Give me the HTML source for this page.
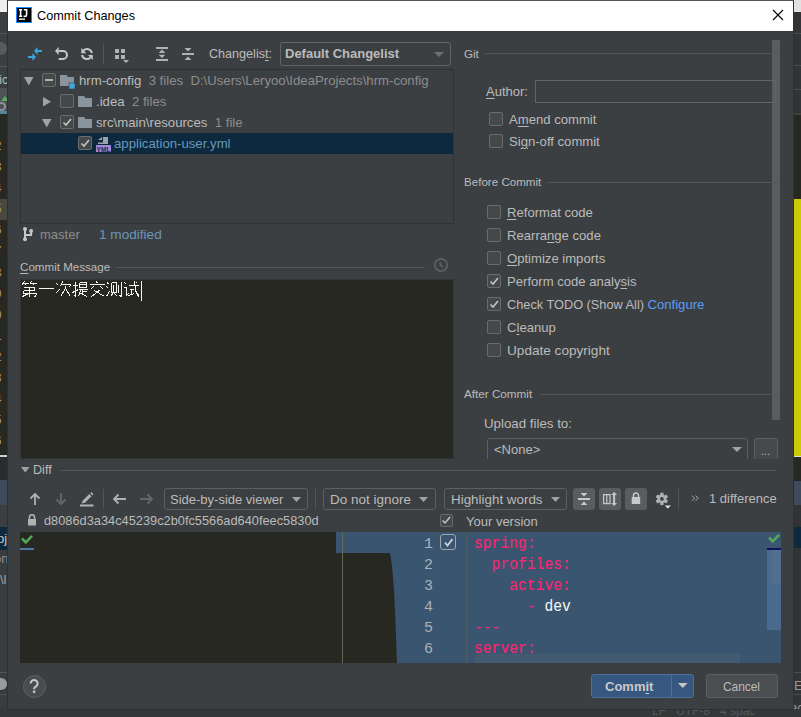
<!DOCTYPE html>
<html><head><meta charset="utf-8">
<style>
*{box-sizing:border-box;margin:0;padding:0}
html,body{width:801px;height:717px;overflow:hidden;background:#313335;font-family:"Liberation Sans",sans-serif;font-size:13px;color:#bbbbbb}
.a{position:absolute}
.t{position:absolute;white-space:pre;line-height:16px}
.cb{position:absolute;width:14px;height:14px;border:1px solid #6b6b6b;border-radius:2px;background:#43494a}
.u{text-decoration:underline;text-decoration-thickness:1px;text-underline-offset:2px}
.sep{position:absolute;height:1px;background:#515658}
.combo{position:absolute;border:1px solid #5e6060;border-radius:3px}
.g{color:#8d8d8d}
svg{position:absolute;overflow:visible}
</style></head>
<body>
<!-- ===== background IDE (left strip) ===== -->
<div class="a" style="left:0;top:0;width:8px;height:12px;background:#eeeeee"></div>
<div class="a" style="left:0;top:12px;width:8px;height:101px;background:#3c3f41"></div>
<div class="a" style="left:0;top:33px;width:8px;height:1px;background:#555"></div>
<div class="a" style="left:0;top:66px;width:8px;height:1px;background:#555"></div>
<div class="a" style="left:0;top:42px;width:7px;height:13px;background:#585b5e;border-radius:0 6px 6px 0"></div>
<div class="t" style="left:-4px;top:72px;color:#bbb;font-size:12px">tic</div>
<div class="a" style="left:0;top:88px;width:8px;height:25px;background:#4e5254"></div>
<div class="a" style="left:1px;top:96px;width:0;height:0;border-left:4px solid transparent;border-right:4px solid transparent;border-bottom:5px solid #59a869"></div>
<div class="a" style="left:-3px;top:102px;width:9px;height:9px;border:2px solid #8e9296;border-radius:50%"></div>
<div class="a" style="left:0;top:111px;width:8px;height:3px;background:#4f8593"></div>
<div class="a" style="left:0;top:114px;width:8px;height:341px;background:#272822"></div>
<div class="a" style="left:0;top:199px;width:8px;height:21px;background:#48483e"></div>
<div class="a" style="left:-6px;top:136px;width:14px;height:319px;overflow:hidden;font-family:'Liberation Mono',monospace;font-size:13px;line-height:21.1px;color:#a89a78;white-space:pre">2
3
4
5
6
7
8
9
0
1
2
3
4
5
6</div>
<div class="a" style="left:0;top:455px;width:8px;height:2px;background:#cfcfcf"></div>
<div class="a" style="left:0;top:457px;width:8px;height:23px;background:#2b2b2b"></div>
<div class="a" style="left:0;top:480px;width:8px;height:25px;background:#3d4b5c"></div>
<div class="a" style="left:0;top:505px;width:8px;height:22px;background:#3c3f41"></div>
<div class="a" style="left:0;top:527px;width:8px;height:23px;background:#0d293e"></div>
<div class="a" style="left:0;top:550px;width:8px;height:167px;background:#393c3e"></div>
<div class="a" style="left:0;top:694px;width:8px;height:1px;background:#4e4e4e"></div>
<div class="t" style="left:-3px;top:531px;color:#c8c8c8;font-size:13px">pj</div>
<div class="t" style="left:-6px;top:551px;color:#8d8d8d;font-size:13px">on</div>
<div class="t" style="left:0px;top:572px;color:#a0a0a0;font-size:13px">\l</div>
<div class="a" style="left:0;top:672px;width:8px;height:1px;background:#555"></div>
<div class="a" style="left:0;top:678px;width:7px;height:12px;background:#9a9a9a;border-radius:0 6px 6px 0"></div>
<!-- right strip -->
<div class="a" style="left:793px;top:0;width:8px;height:12px;background:#e2e2e2"></div>
<div class="a" style="left:793px;top:33px;width:8px;height:1px;background:#4a4d4f"></div>
<div class="a" style="left:793px;top:65px;width:8px;height:1px;background:#4a4d4f"></div>
<div class="a" style="left:793px;top:89px;width:8px;height:1px;background:#4a4d4f"></div>
<div class="a" style="left:793px;top:113px;width:8px;height:2px;background:#3c3f41"></div>
<div class="a" style="left:793px;top:115px;width:8px;height:84px;background:#272822"></div>
<div class="a" style="left:793px;top:199px;width:8px;height:257px;background:#c9cc00"></div>
<div class="a" style="left:793px;top:456px;width:8px;height:1px;background:#ddd"></div>
<div class="a" style="left:793px;top:457px;width:8px;height:24px;background:#272822"></div>
<div class="a" style="left:793px;top:481px;width:8px;height:24px;background:#3d4b5c"></div>
<div class="a" style="left:793px;top:527px;width:8px;height:21px;background:#0d293e"></div>
<div class="a" style="left:793px;top:672px;width:8px;height:1px;background:#4a4d4f"></div>
<div class="a" style="left:793px;top:694px;width:8px;height:1px;background:#4a4d4f"></div>
<div class="t" style="left:794px;top:678px;color:#999;font-size:13px">Ev</div>
<div class="t" style="left:790px;top:700px;color:#999;font-size:13px">ac</div>
<!-- bottom status strip -->
<div class="a" style="left:0;top:709px;width:801px;height:8px;background:#353739"></div>
<div class="t" style="left:652px;top:703px;color:#55585a;font-size:12px">LF   UTF-8   4 spac</div>

<!-- ===== dialog ===== -->
<div class="a" style="left:7px;top:0;width:787px;height:710px;background:#3c3f41;border:1px solid #2e3032;border-top-color:#555"></div>
<div class="a" style="left:8px;top:1px;width:785px;height:30px;background:#ffffff"></div>
<svg style="left:16px;top:7px" width="16" height="16" viewBox="0 0 16 16">
 <rect x="0.5" y="0.5" width="15" height="15" fill="#000" stroke="#1e88ff" stroke-width="1"/>
 <path d="M3 2.8h3.2M4.6 2.8v6.4M3 9.2h3.2M7.8 2.8h3.6M10.6 2.8v4.9q0 1.7-1.6 1.7h-1.4" stroke="#fff" stroke-width="1.6" fill="none"/>
 <rect x="3" y="11.5" width="6" height="1.3" fill="#fff"/>
</svg>
<div class="t" style="left:37px;top:8px;color:#000;font-size:12.7px">Commit Changes</div>
<svg style="left:772px;top:9px" width="12" height="12" viewBox="0 0 12 12"><path d="M1 1L11 11M11 1L1 11" stroke="#000" stroke-width="1.1"/></svg>

<!-- toolbar icons -->
<svg style="left:24px;top:42px" width="24" height="24" viewBox="0 0 24 24">
 <path d="M13.5 5L10 9l3.5 4z M13.5 8h4.5v2h-4.5z M8.4 11L12 15l-3.6 4z M3.85 14h4.55v2h-4.55z" fill="#3aa3dc"/>
</svg>
<svg style="left:50px;top:42px" width="24" height="24" viewBox="0 0 24 24">
 <path d="M8.7 9H13A4 4 0 0 1 13 17H8.7" fill="none" stroke="#c4c6c8" stroke-width="2"/>
 <path d="M5 9l3.7-4v8z" fill="#c4c6c8"/>
</svg>
<svg style="left:75px;top:42px" width="24" height="24" viewBox="0 0 24 24">
 <path d="M8.46 8.46A5 5 0 0 1 16.9 11" fill="none" stroke="#c4c6c8" stroke-width="2"/>
 <path d="M15.5 15.5A5 5 0 0 1 7 13" fill="none" stroke="#c4c6c8" stroke-width="2"/>
 <path d="M6.3 6v5.3h5z M17.8 18v-5h-4.8z" fill="#c4c6c8"/>
</svg>
<div class="a" style="left:103px;top:44px;width:1px;height:20px;background:#515658"></div>
<svg style="left:114px;top:48px" width="16" height="16" viewBox="0 0 16 16">
 <rect x="1" y="1" width="4" height="4" fill="#afb1b3"/><rect x="7" y="1" width="4" height="4" fill="#afb1b3"/>
 <rect x="1" y="7" width="4" height="4" fill="#afb1b3"/><rect x="7" y="7" width="4" height="4" fill="#afb1b3"/>
 <path d="M9 12h6l-3 3z" fill="#afb1b3"/>
</svg>
<svg style="left:154px;top:45px" width="16" height="18" viewBox="0 0 16 18">
 <rect x="2" y="2" width="12" height="2" fill="#afb1b3"/><rect x="2" y="14" width="12" height="2" fill="#afb1b3"/>
 <path d="M8 4.6l3.4 3.4h-6.8z M8 13.1l3.4-3.4h-6.8z" fill="#afb1b3"/>
</svg>
<svg style="left:180px;top:45px" width="16" height="18" viewBox="0 0 16 18">
 <rect x="2" y="8" width="12" height="2" fill="#afb1b3"/>
 <path d="M4.5 3h7L8 6.5z M4.5 15h7L8 11.5z" fill="#afb1b3"/>
</svg>

<div class="t" style="left:209px;top:46px;font-size:12.6px">Changelis<span class="u">t</span>:</div>
<div class="combo" style="left:280px;top:42px;width:171px;height:24px;border-color:#646464"></div>
<div class="t" style="left:285px;top:46px;font-weight:bold">Default Changelist</div>
<svg style="left:434px;top:52px" width="10" height="5" viewBox="0 0 10 5"><path d="M0 0h10L5 5z" fill="#6e7072"/></svg>

<!-- tree -->
<div class="a" style="left:20px;top:69px;width:434px;height:155px;border:1px solid #323232"></div>
<div class="a" style="left:21px;top:133px;width:432px;height:21px;background:#0d293e"></div>
<svg style="left:24px;top:77px" width="10" height="9" viewBox="0 0 10 9"><path d="M0 0h9.5L4.75 8.5z" fill="#a0a2a4"/></svg>
<div class="cb" style="left:42px;top:73px"></div>
<div class="a" style="left:45px;top:79px;width:8px;height:2px;background:#b0b0b0"></div>
<svg style="left:60px;top:75px" width="16" height="14" viewBox="0 0 16 14">
 <path d="M0 0h6.5l1.5 2h6v9h-14z" fill="#8a949c"/>
 <rect x="9" y="8" width="6" height="6" fill="#3fa9dc" stroke="#3c3f41" stroke-width="0.6"/>
</svg>
<div class="t" style="left:79px;top:73px;font-size:13.2px">hrm-config  <span class="g">3 files  D:\Users\Leryoo\IdeaProjects\hrm-config</span></div>

<svg style="left:43px;top:97px" width="9" height="10" viewBox="0 0 9 10"><path d="M0 0v9.5L8 4.75z" fill="#a0a2a4"/></svg>
<div class="cb" style="left:60px;top:94px"></div>
<svg style="left:78px;top:96px" width="14" height="11" viewBox="0 0 14 11"><path d="M0 0h6l1.5 2h6.5v9h-14z" fill="#8a949c"/></svg>
<div class="t" style="left:96px;top:94px;font-size:13.2px">.idea  <span class="g">2 files</span></div>

<svg style="left:41.5px;top:119px" width="10" height="9" viewBox="0 0 10 9"><path d="M0 0h9.5L4.75 8.5z" fill="#a0a2a4"/></svg>
<div class="cb" style="left:60px;top:115px"></div>
<svg style="left:61px;top:116px" width="12" height="12" viewBox="0 0 12 12"><path d="M2.5 6.5l2.5 2.5 5-6" fill="none" stroke="#c4c4c4" stroke-width="1.6"/></svg>
<svg style="left:78px;top:117px" width="14" height="11" viewBox="0 0 14 11"><path d="M0 0h6l1.5 2h6.5v9h-14z" fill="#8a949c"/></svg>
<div class="t" style="left:96px;top:115px;font-size:13.2px">src\main\resources  <span class="g">1 file</span></div>

<div class="cb" style="left:78px;top:136px"></div>
<svg style="left:79px;top:137px" width="12" height="12" viewBox="0 0 12 12"><path d="M2.5 6.5l2.5 2.5 5-6" fill="none" stroke="#c4c4c4" stroke-width="1.6"/></svg>
<svg style="left:96px;top:136px" width="16" height="16" viewBox="0 0 16 16">
 <path d="M2 4L6 1V4Z M7 1h5v7h-5z M2 6.4h10v1.6h-10z" fill="#9aa5ad"/>
 <rect x="0" y="9" width="15" height="7" fill="#9f87d9"/>
 <text x="7.5" y="15.7" font-family="Liberation Sans" font-weight="bold" font-size="7.6" fill="#2e2b40" text-anchor="middle" textLength="14" lengthAdjust="spacingAndGlyphs">YML</text>
</svg>
<div class="t" style="left:114px;top:136px;font-size:13.2px;color:#6897bb">application-user.yml</div>

<!-- branch -->
<svg style="left:20px;top:226px" width="14" height="16" viewBox="0 0 14 16">
 <path d="M5 3v10M11.1 5V9.1H5" fill="none" stroke="#c4c6c8" stroke-width="2"/>
 <circle cx="5" cy="2.9" r="2" fill="#c4c6c8"/><circle cx="5" cy="13.2" r="2" fill="#c4c6c8"/><circle cx="11.1" cy="5" r="2" fill="#c4c6c8"/>
</svg>
<div class="t" style="left:40px;top:227px;color:#8d8d8d">master</div>
<div class="t" style="left:99px;top:227px;color:#6897bb;font-size:13.6px">1 modified</div>

<div class="t" style="left:20px;top:259px;font-size:11.6px"><span class="u">C</span>ommit Message</div>
<div class="sep" style="left:116px;top:267px;width:309px"></div>
<svg style="left:433px;top:257px" width="16" height="16" viewBox="0 0 16 16">
 <circle cx="8" cy="8" r="6.2" fill="none" stroke="#5c6063" stroke-width="1.7"/>
 <path d="M7.2 5l0.4 3 2.4 2.2" fill="none" stroke="#5c6063" stroke-width="1.7"/>
</svg>
<div class="a" style="left:20px;top:279px;width:434px;height:180px;background:#272822;border:1px solid #333436"></div>
<svg style="left:0;top:0" width="801" height="717"><path d="M24.5 281.5 L21.5 285.5 M23.5 283.5 L28.5 283.5 M25.5 284.5 L26.5 285.5 M31.5 281.5 L29.5 284.5 M30.5 283.5 L36.5 283.5 M33.5 284.5 L34.5 285.5 M23.5 287.5 L34.5 287.5 M34.5 287.5 L34.5 290.5 M23.5 290.5 L34.5 290.5 M23.5 290.5 L23.5 293.5 M23.5 293.5 L36.5 293.5 M36.5 293.5 L35.5 296.5 L33.5 296.5 M29.5 286.5 L29.5 296.5 M28.5 293.5 L22.5 296.5 M38.5 288.5 L53.5 288.5 M56.5 283.5 L58.5 285.5 M55.5 293.5 L59.5 289.5 M62.5 281.5 L60.5 286.5 M61.5 284.5 L70.5 284.5 L69.5 287.5 M65.5 285.5 L65.5 288.5 L60.5 296.5 M65.5 288.5 L70.5 296.5 M72.5 285.5 L77.5 285.5 M75.5 281.5 L75.5 296.5 L74.5 295.5 M72.5 292.5 L78.5 289.5 M79.5 282.5 L86.5 282.5 L86.5 287.5 L79.5 287.5 L79.5 282.5 M79.5 284.5 L86.5 284.5 M78.5 289.5 L87.5 289.5 M82.5 289.5 L82.5 294.5 M82.5 291.5 L86.5 291.5 M80.5 290.5 L78.5 296.5 M80.5 293.5 L87.5 296.5 M96.5 281.5 L97.5 283.5 M89.5 284.5 L104.5 284.5 M93.5 286.5 L90.5 289.5 M100.5 286.5 L103.5 289.5 M100.5 289.5 L91.5 296.5 M94.5 290.5 L104.5 296.5 M107.5 282.5 L108.5 284.5 M106.5 286.5 L108.5 288.5 M106.5 296.5 L109.5 291.5 M111.5 282.5 L116.5 282.5 L116.5 292.5 L111.5 292.5 L111.5 282.5 M113.5 284.5 L113.5 291.5 M113.5 292.5 L110.5 296.5 M114.5 293.5 L117.5 296.5 M118.5 284.5 L118.5 292.5 M121.5 281.5 L121.5 296.5 L119.5 295.5 M124.5 282.5 L126.5 284.5 M123.5 287.5 L126.5 287.5 L126.5 295.5 L128.5 293.5 M128.5 285.5 L138.5 285.5 M136.5 282.5 L137.5 283.5 M129.5 289.5 L133.5 289.5 M131.5 289.5 L131.5 294.5 M128.5 295.5 L134.5 293.5 M134.5 281.5 L135.5 290.5 L138.5 296.5 L138.5 293.5" fill="none" stroke="#f4f4f0" stroke-width="1" shape-rendering="crispEdges"/></svg>
<div class="a" style="left:141px;top:281px;width:1px;height:20px;background:#f8f8f2"></div>

<!-- ===== right panel ===== -->
<div class="a" style="left:772px;top:40px;width:8px;height:380px;background:#5a5d5f"></div>
<div class="t" style="left:464px;top:46px;font-size:11.6px">Git</div>
<div class="sep" style="left:485px;top:53px;width:293px"></div>
<div class="t" style="left:486px;top:84px"><span class="u">A</span>uthor:</div>
<div class="a" style="left:535px;top:80px;width:241px;height:23px;border:1px solid #646464"></div>
<div class="cb" style="left:489px;top:112px"></div>
<div class="t" style="left:509px;top:112px;font-size:13.1px">A<span class="u">m</span>end commit</div>
<div class="cb" style="left:489px;top:134px"></div>
<div class="t" style="left:509px;top:134px;font-size:13.1px">Si<span class="u">g</span>n-off commit</div>

<div class="t" style="left:464px;top:174px;font-size:11.6px">Before Commit</div>
<div class="sep" style="left:547px;top:182px;width:231px"></div>
<div class="cb" style="left:487px;top:205px"></div>
<div class="t" style="left:507px;top:205px;font-size:13.1px"><span class="u">R</span>eformat code</div>
<div class="cb" style="left:487px;top:228px"></div>
<div class="t" style="left:507px;top:228px;font-size:13.1px">Rearra<span class="u">n</span>ge code</div>
<div class="cb" style="left:487px;top:251px"></div>
<div class="t" style="left:507px;top:251px;font-size:13.1px"><span class="u">O</span>ptimize imports</div>
<div class="cb" style="left:487px;top:274px"></div>
<svg style="left:488px;top:275px" width="12" height="12" viewBox="0 0 12 12"><path d="M2.5 6.5l2.5 2.5 5-6" fill="none" stroke="#c4c4c4" stroke-width="1.6"/></svg>
<div class="t" style="left:507px;top:274px;font-size:13.1px">Perform code analy<span class="u">s</span>is</div>
<div class="cb" style="left:487px;top:297px"></div>
<svg style="left:488px;top:298px" width="12" height="12" viewBox="0 0 12 12"><path d="M2.5 6.5l2.5 2.5 5-6" fill="none" stroke="#c4c4c4" stroke-width="1.6"/></svg>
<div class="t" style="left:507px;top:297px;font-size:12.75px">Check TODO (Show All) <span style="color:#589df6;font-size:13.1px">Configure</span></div>
<div class="cb" style="left:487px;top:320px"></div>
<div class="t" style="left:507px;top:320px;font-size:13.1px">C<span class="u">l</span>eanup</div>
<div class="cb" style="left:487px;top:343px"></div>
<div class="t" style="left:507px;top:343px;font-size:13.6px">Update copyright</div>

<div class="t" style="left:464px;top:386px;font-size:11.7px">After Commit</div>
<div class="sep" style="left:540px;top:394px;width:238px"></div>
<div class="t" style="left:484px;top:416px;font-size:13.3px">Upload files to:</div>
<div class="combo" style="left:487px;top:438px;width:261px;height:26px"></div>
<div class="t" style="left:494px;top:442px">&lt;None&gt;</div>
<svg style="left:732px;top:447px" width="10" height="5" viewBox="0 0 10 5"><path d="M0 0h10L5 5z" fill="#a0a2a4"/></svg>
<div class="combo" style="left:754px;top:438px;width:24px;height:26px;background:#45494a"></div>
<div class="t" style="left:761px;top:443px;font-size:11px">...</div>

<!-- ===== diff section ===== -->
<div class="a" style="left:8px;top:459px;width:785px;height:249px;background:#3c3f41"></div>
<svg style="left:21px;top:467px" width="9" height="6" viewBox="0 0 9 6"><path d="M0 0h8.5L4.25 5.5z" fill="#a0a2a4"/></svg>
<div class="t" style="left:33px;top:462px;font-size:12.6px">Diff</div>
<div class="sep" style="left:60px;top:470px;width:716px"></div>

<svg style="left:27px;top:491px" width="16" height="16" viewBox="0 0 16 16"><path d="M8 14V4M3.5 7.5L8 3l4.5 4.5" fill="none" stroke="#afb1b3" stroke-width="1.8"/></svg>
<svg style="left:53px;top:491px" width="16" height="16" viewBox="0 0 16 16"><path d="M8 2v10M3.5 8.5L8 13l4.5-4.5" fill="none" stroke="#646768" stroke-width="1.8"/></svg>
<svg style="left:79px;top:491px" width="16" height="16" viewBox="0 0 16 16"><path d="M2.6 12.6L3.8 9.6L10.3 3.1L12.5 5.3L6 11.8Z M11.2 2.2L12.3 1.1L14.5 3.3L13.4 4.4Z" fill="#afb1b3"/><rect x="1" y="13.5" width="13.5" height="2" fill="#afb1b3"/></svg>
<div class="a" style="left:103px;top:489px;width:1px;height:20px;background:#515658"></div>
<svg style="left:111px;top:491px" width="16" height="16" viewBox="0 0 16 16"><path d="M15 8H3M7.5 3.5L3 8l4.5 4.5" fill="none" stroke="#afb1b3" stroke-width="1.8"/></svg>
<svg style="left:139px;top:491px" width="16" height="16" viewBox="0 0 16 16"><path d="M1 8h12M8.5 3.5L13 8l-4.5 4.5" fill="none" stroke="#646768" stroke-width="1.8"/></svg>

<div class="combo" style="left:164px;top:488px;width:144px;height:22px"></div>
<div class="t" style="left:170px;top:492px">Side-by-side viewer</div>
<svg style="left:292px;top:497px" width="9" height="5" viewBox="0 0 9 5"><path d="M0 0h9L4.5 5z" fill="#a0a2a4"/></svg>
<div class="a" style="left:315px;top:489px;width:1px;height:20px;background:#515658"></div>
<div class="combo" style="left:323px;top:488px;width:113px;height:22px"></div>
<div class="t" style="left:330px;top:492px;font-size:13.5px">Do not ignore</div>
<svg style="left:419px;top:497px" width="9" height="5" viewBox="0 0 9 5"><path d="M0 0h9L4.5 5z" fill="#a0a2a4"/></svg>
<div class="combo" style="left:444px;top:488px;width:123px;height:22px"></div>
<div class="t" style="left:451px;top:492px;font-size:13.4px">Highlight words</div>
<svg style="left:551px;top:497px" width="9" height="5" viewBox="0 0 9 5"><path d="M0 0h9L4.5 5z" fill="#a0a2a4"/></svg>

<div class="a" style="left:573px;top:488px;width:22px;height:22px;border-radius:3px;background:#5a5d60"></div>
<svg style="left:576px;top:491px" width="16" height="16" viewBox="0 0 16 16"><rect x="2" y="7" width="12" height="2" fill="#c8c8c8"/><path d="M4.5 2h7L8 5.5z M4.5 14h7L8 10.5z" fill="#c8c8c8"/></svg>
<div class="a" style="left:599px;top:488px;width:22px;height:22px;border-radius:3px;background:#5a5d60"></div>
<svg style="left:602px;top:491px" width="16" height="16" viewBox="0 0 16 16"><path d="M1.6 3.6h6.4v9h-6.4z M4.8 3.6v9" fill="none" stroke="#c8c8c8" stroke-width="1.2"/><path d="M12.1 3v10" stroke="#c8c8c8" stroke-width="2"/><path d="M9.2 4l2.9-3 2.9 3z M9.2 12l2.9 3 2.9-3z" fill="#c8c8c8"/></svg>
<div class="a" style="left:625px;top:488px;width:22px;height:22px;border-radius:3px;background:#5a5d60"></div>
<svg style="left:628px;top:491px" width="16" height="16" viewBox="0 0 16 16"><path d="M5.5 6.5V4.5a2.5 2.5 0 0 1 5 0V6.5" fill="none" stroke="#c8c8c8" stroke-width="1.4"/><rect x="3.7" y="6" width="8.5" height="7" fill="#c8c8c8"/></svg>
<svg style="left:654px;top:491px" width="18" height="18" viewBox="0 0 18 18">
 <g transform="translate(7.9 7.9)"><path d="M-1.6 -6.2h3.2v3h-3.2z" fill="#afb1b3" transform="rotate(0)"/><path d="M-1.6 -6.2h3.2v3h-3.2z" fill="#afb1b3" transform="rotate(60)"/><path d="M-1.6 -6.2h3.2v3h-3.2z" fill="#afb1b3" transform="rotate(120)"/><path d="M-1.6 -6.2h3.2v3h-3.2z" fill="#afb1b3" transform="rotate(180)"/><path d="M-1.6 -6.2h3.2v3h-3.2z" fill="#afb1b3" transform="rotate(240)"/><path d="M-1.6 -6.2h3.2v3h-3.2z" fill="#afb1b3" transform="rotate(300)"/><circle r="4.5" fill="#afb1b3"/><circle r="1.9" fill="#3c3f41"/></g>
 <path d="M10.8 14.6h6l-3 3z" fill="#e8e8e8"/>
</svg>
<div class="a" style="left:678px;top:489px;width:1px;height:20px;background:#515658"></div>
<svg style="left:691px;top:494.8px" width="9" height="7" viewBox="0 0 9 7"><path d="M1 0.6l2.6 2.6-2.6 2.6M4.6 0.6l2.6 2.6-2.6 2.6" fill="none" stroke="#a8aaac" stroke-width="1"/></svg>
<div class="t" style="left:709px;top:491px">1 difference</div>

<svg style="left:27px;top:513.3px" width="10" height="14" viewBox="0 0 10 14"><path d="M2.5 6V4.3a2.5 2.5 0 0 1 5 0V6" fill="none" stroke="#afb1b3" stroke-width="1.6"/><rect x="1" y="6" width="8" height="6.5" fill="#afb1b3"/></svg>
<div class="t" style="left:44px;top:513px;font-size:12.8px">d8086d3a34c45239c2b0fc5566ad640feec5830d</div>
<div class="cb" style="left:440px;top:514px;width:13px;height:13px"></div>
<svg style="left:440px;top:514px" width="12" height="12" viewBox="0 0 12 12"><path d="M2.5 6.5l2.5 2.5 5-6" fill="none" stroke="#c4c4c4" stroke-width="1.5"/></svg>
<div class="t" style="left:466px;top:514px">Your version</div>

<!-- diff editors -->
<div class="a" style="left:20px;top:532px;width:761px;height:131px;background:#272822"></div>
<div class="a" style="left:336px;top:532px;width:445px;height:21px;background:#3a5570"></div>
<svg style="left:0;top:0" width="801" height="717"><path d="M390 553 C393.5 572 395 600 397 663 L781 663 L781 553 Z" fill="#3a5570"/></svg>
<div class="a" style="left:342px;top:532px;width:1px;height:131px;background:#6d6d58;opacity:0.85"></div>
<svg style="left:20px;top:532.5px" width="14" height="12" viewBox="0 0 14 12"><path d="M2 5.5l3.8 3.8L12 2.8" fill="none" stroke="#55a656" stroke-width="2.6"/></svg>
<div class="a" style="left:20px;top:548px;width:14px;height:2px;background:#4a78a8"></div>
<div class="a" style="left:466px;top:532px;width:1px;height:131px;background:#4e5e60"></div>
<div class="a" style="left:403px;top:534px;width:30px;font-family:'Liberation Mono',monospace;font-size:15px;line-height:21px;color:#a9b2ba;text-align:right;white-space:pre">1
2
3
4
5
6</div>
<div class="a" style="left:440px;top:534px;width:16px;height:16px;border:1.5px solid #a0a8ae;border-radius:3px"></div>
<svg style="left:441.5px;top:535.5px" width="13" height="13" viewBox="0 0 13 13"><path d="M3 6.5l2.5 3 5-6.5" fill="none" stroke="#d0d4d8" stroke-width="1.8"/></svg>
<div class="a" style="left:474px;top:533px;font-family:'Liberation Mono',monospace;font-size:16.5px;line-height:21px;color:#f92672;white-space:pre;transform:scaleX(0.889);transform-origin:0 0;-webkit-text-stroke:0.1px #f92672">spring:
  profiles:
    active:
      - <span style="color:#f8f8f2;-webkit-text-stroke:0">dev</span>
---
server:</div>
<div class="a" style="left:474px;top:654px;width:266px;height:9px;background:#435b71"></div>
<div class="a" style="left:767px;top:548px;width:14px;height:2px;background:#101060"></div>
<div class="a" style="left:767px;top:550px;width:14px;height:80px;background:#4a6b8f"></div>
<div class="a" style="left:772px;top:550px;width:9px;height:33px;background:#51708f"></div>
<svg style="left:767px;top:532px" width="14" height="12" viewBox="0 0 14 12"><path d="M2 5.5l3.8 3.8L12 2.8" fill="none" stroke="#55a656" stroke-width="2.6"/></svg>

<!-- bottom buttons -->
<div class="a" style="left:23px;top:675px;width:23px;height:23px;border-radius:50%;border:1px solid #5e6060;background:#484c4e"></div>
<svg style="left:23px;top:675px" width="23" height="23" viewBox="0 0 23 23"><path d="M7.6 8.6A3.5 3.5 0 1 1 13.6 11Q11.1 12.2 11.1 13.8V14.3" fill="none" stroke="#c8c8c8" stroke-width="2"/><rect x="9.9" y="15.6" width="2.4" height="2.3" fill="#c8c8c8"/></svg>
<div class="a" style="left:591px;top:674px;width:103px;height:24px;border:1px solid #4c709a;border-radius:3px;background:#365880"></div>
<div class="a" style="left:671px;top:675px;width:1px;height:22px;background:#4c709a"></div>
<div class="t" style="left:605px;top:679px;font-weight:bold;color:#c8c8c8">Comm<span class="u">i</span>t</div>
<svg style="left:678px;top:683px" width="10" height="6" viewBox="0 0 10 6"><path d="M0 0h9.5L4.75 5z" fill="#c8c8c8"/></svg>
<div class="a" style="left:706px;top:674px;width:72px;height:24px;border:1px solid #5e6060;border-radius:3px;background:#4a4e50"></div>
<div class="t" style="left:723px;top:679px;font-size:11.9px">Cancel</div>
</body></html>
